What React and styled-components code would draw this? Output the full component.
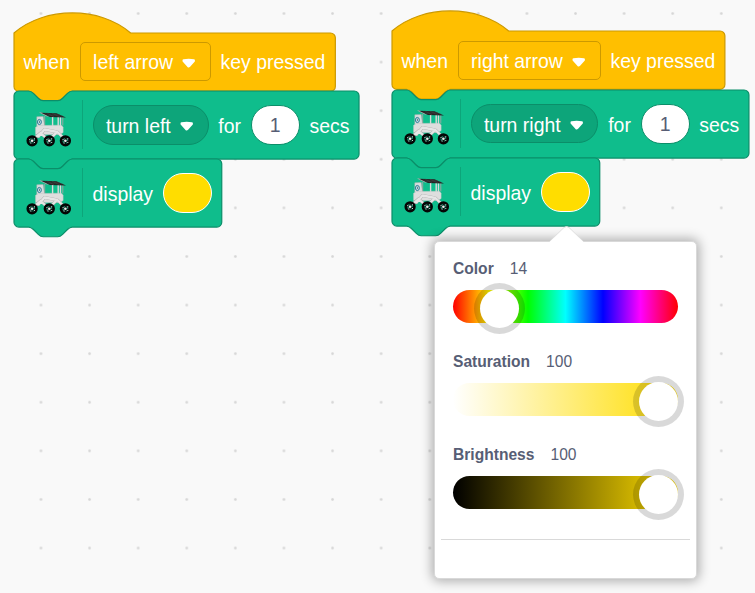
import React from "react";
import styled, { createGlobalStyle } from "styled-components";

const S = 1.215;

const GlobalStyle = createGlobalStyle`
  body {
    margin: 0;
    overflow: hidden;
    font-family: "Liberation Sans", Arial, sans-serif;
  }
`;

const Workspace = styled.main`
  position: relative;
  width: 755px;
  height: 593px;
  overflow: hidden;
  background-color: #f9f9f9;
  background-image: radial-gradient(circle, #d6d6d6 0.8px, rgba(214, 214, 214, 0) 1.8px);
  background-size: 48.6px 48.6px;
  background-position: 16.7px -10.8px;
`;

const Script = styled.section`
  position: absolute;
  left: ${(p) => p.$x}px;
  top: ${(p) => p.$y}px;
  display: flex;
  flex-direction: column;
  align-items: flex-start;
`;

const BlockBox = styled.div`
  position: relative;
  box-sizing: border-box;
  display: flex;
  align-items: center;
  gap: 9.72px;
  width: ${(p) => p.$width * S}px;
  height: ${(p) => p.$height * S}px;
  padding: 0 9.72px;
  color: #fff;
  font-size: 19.44px;
  white-space: nowrap;
`;

const BlockShape = styled.svg`
  position: absolute;
  left: 0;
  top: 0;
  width: 100%;
  height: 100%;
  overflow: visible;
`;

const Word = styled.span`
  position: relative;
  padding-top: ${(p) => (p.$low ? 3 : 2)}px;
`;

const Dropdown = styled.div`
  position: relative;
  box-sizing: border-box;
  display: flex;
  align-items: center;
  gap: 8.3px;
  height: 39.4px;
  padding: 0 13.1px 0 12.4px;
  border: 1px solid ${(p) => (p.$round ? "#0b8e69" : "#cc9900")};
  border-radius: ${(p) => (p.$round ? 20 : 5)}px;
  background: ${(p) => (p.$round ? "#0da57a" : "#ffbf00")};
`;

const CaretIcon = styled.svg`
  flex: none;
  width: 15.44px;
  height: 10.68px;
  margin-top: 3px;
`;

const Oval = styled.div`
  position: relative;
  box-sizing: border-box;
  display: grid;
  place-items: center;
  flex: none;
  width: 49px;
  height: 40px;
  padding-top: 2px;
  border: 1.2px solid ${(p) => (p.$swatch ? "#fff" : "#0b8e69")};
  border-radius: 20px;
  background: ${(p) => p.$swatch || "#fff"};
  color: #575e75;
`;

const RoverIcon = styled.svg`
  position: relative;
  flex: none;
  width: 48.6px;
  height: 48.6px;
`;

const Separator = styled.div`
  position: relative;
  flex: none;
  width: 1px;
  height: 49px;
  background: #0da57a;
`;

const Picker = styled.aside`
  position: absolute;
  left: 434px;
  top: 241px;
  box-sizing: border-box;
  width: 263px;
  height: 338px;
  padding: 18px 6px 0;
  border: 1px solid #d9d9d9;
  border-radius: 5px;
  background: #fff;
  box-shadow: 0 0 12px 2px rgba(0, 0, 0, 0.32);
  color: #575e75;
`;

const PickerArrow = styled.svg`
  position: absolute;
  left: 114px;
  top: -16px;
  width: 35px;
  height: 17px;
`;

const Channel = styled.div`
  height: 93px;
  padding: 0 12px;
`;

const ChannelHead = styled.div`
  display: flex;
  gap: 16px;
  height: 18px;
  margin-bottom: 12px;
  font-size: 15.6px;
  line-height: 18px;
`;

const ChannelName = styled.span`
  font-weight: 700;
`;

const Track = styled.div`
  position: relative;
  height: 33px;
  border-radius: 16.5px;
  background: ${(p) => p.$fill};
`;

const Handle = styled.div`
  position: absolute;
  left: ${(p) => p.$left}px;
  top: -1px;
  width: 39px;
  height: 39px;
  border-radius: 50%;
  background: #fff;
  box-shadow: 0 0 0 6px rgba(0, 0, 0, 0.15);
`;

const Divider = styled.hr`
  height: 1px;
  margin: 0;
  border: 0;
  background: #d9d9d9;
`;

const TAB =
  "H 48 c -2,0 -3,1 -4,2 l -4,4 c -1,1 -2,2 -4,2 h -12 c -2,0 -3,-1 -4,-2 l -4,-4 c -1,-1 -2,-2 -4,-2 H 4 a 4,4 0 0,1 -4,-4 z";
const NOTCH =
  "M 0,4 a 4,4 0 0,1 4,-4 H 12 c 2,0 3,1 4,2 l 4,4 c 1,1 2,2 4,2 h 12 c 2,0 3,-1 4,-2 l 4,-4 c 1,-1 2,-2 4,-2";
const HAT = "M 0,0 c 25,-22 71,-22 96,0";

function Block({ hat, width, children }) {
  const height = hat ? 48 : 56;
  const d = `${hat ? HAT : NOTCH} H ${width - 4} a 4,4 0 0,1 4,4 V ${height - 4} a 4,4 0 0,1 -4,4 ${TAB}`;
  return (
    <BlockBox $width={width} $height={height}>
      <BlockShape viewBox={`0 0 ${width} ${height}`}>
        <path d={d} fill={hat ? "#ffbf00" : "#0fbd8c"} stroke={hat ? "#cc9900" : "#0b8e69"} />
      </BlockShape>
      {children}
    </BlockBox>
  );
}

function Caret() {
  return (
    <CaretIcon viewBox="0 0 12.71 8.79">
      <path
        d="M2.2 1.9Q6.36 1.3 10.5 1.9L10.5 2.5L6.8 6.6Q6.36 7 5.9 6.6L2.2 2.5Z"
        fill="#fff"
        stroke="#fff"
        strokeWidth="1.9"
        strokeLinejoin="round"
      />
    </CaretIcon>
  );
}

const WHEELS = [8.1, 25.3, 41.4];
const LEGS = "M8.5 39l8-7 8 7M14 36l6.5-7.5 13 2.5 8 8M25 39l9-9";

function Rover() {
  return (
    <RoverIcon viewBox="0 0 48.6 48.6">
      <path d="M28.6 15v11M34.2 15v11M36.5 15v11" stroke="#dadada" strokeWidth="1.4" />
      <path d="M12.8 15.8l6.4-.4 1.4 10h-7.8z" fill="#d9dcdd" stroke="#aab0b2" strokeWidth=".5" />
      <path d="M20.7 15v10M38.8 15.5v9" stroke="#a5a5a5" strokeWidth=".9" />
      <path d="M11.6 26.3l3-1.8 22.5-.3 2 1.7v5.6l-3 2H11.6z" fill="#dedede" stroke="#c8c8c8" strokeWidth=".5" />
      <path d={LEGS} fill="none" stroke="#aaa" strokeWidth="3" strokeLinejoin="round" />
      <path d={LEGS} fill="none" stroke="#e6e6e6" strokeWidth="2.3" strokeLinejoin="round" />
      <path d="M15 11.4l3 .2 7 3.7-2 .3z" fill="#b0b0b0" />
      <path d="M17 11.8l15.5.4 9.5 4.2-16-.3z" fill="#202020" />
      <path d="M21 13l15 .5M24 14.6l15 .3M23 12l7 3.8M28 12.2l8 3.8" stroke="#555" strokeWidth=".35" />
      <ellipse cx="15.4" cy="21" rx="1.9" ry="2.6" fill="#d9edf5" stroke="#237892" strokeWidth="1" />
      <path d="M15.4 19.6v2.6" stroke="#29434e" strokeWidth=".7" />
      {WHEELS.map((x) => (
        <g key={x} transform={`translate(${x} 39.8)`}>
          <circle r="4.3" fill="#147d61" stroke="#050505" strokeWidth="2.7" />
          <path d="M0-3.5V3.5M-3.4-1L3.4 1M-2 3L2-3M-2.6-2.4L2.6 2.4" stroke="#080808" strokeWidth="1" />
          <circle r="1.3" fill="#eee" />
          <path d="M-2.9-1.2h1.1M1.8-2h1.1M-1.9 2.2h1.1M1.9 1.7h1" stroke="#d5eee6" strokeWidth=".9" />
        </g>
      ))}
    </RoverIcon>
  );
}

function KeyScript({ x, y, direction, hatWidth, turnWidth }) {
  return (
    <Script $x={x} $y={y}>
      <Block hat width={hatWidth}>
        <Word>when</Word>
        <Dropdown>
          <Word>{direction} arrow</Word>
          <Caret />
        </Dropdown>
        <Word>key pressed</Word>
      </Block>
      <Block width={turnWidth}>
        <Rover />
        <Separator />
        <Dropdown $round>
          <Word $low>turn {direction}</Word>
          <Caret />
        </Dropdown>
        <Word $low>for</Word>
        <Oval>1</Oval>
        <Word $low>secs</Word>
      </Block>
      <Block width={171}>
        <Rover />
        <Separator />
        <Word $low>display</Word>
        <Oval $swatch="#ffdd00" />
      </Block>
    </Script>
  );
}

const CHANNELS = [
  {
    name: "Color",
    value: 14,
    left: 27,
    fill: "linear-gradient(90deg, #f00, #ff0 16.67%, #0f0 33.33%, #0ff 50%, #00f 66.67%, #f0f 83.33%, #f00)",
  },
  { name: "Saturation", value: 100, left: 186, fill: "linear-gradient(90deg, #fff, #ffdd00)" },
  { name: "Brightness", value: 100, left: 186, fill: "linear-gradient(90deg, #000, #ffdd00)" },
];

function ColorPicker() {
  return (
    <Picker>
      <PickerArrow viewBox="0 0 35 17">
        <path d="M0 17V16L15 1.5Q17.5-.5 20 1.5L35 16V17Z" fill="#fff" />
        <path d="M0 16L15 1.5Q17.5-.5 20 1.5L35 16" fill="none" stroke="#d9d9d9" strokeWidth=".8" />
      </PickerArrow>
      {CHANNELS.map((c) => (
        <Channel key={c.name}>
          <ChannelHead>
            <ChannelName>{c.name}</ChannelName>
            <span>{c.value}</span>
          </ChannelHead>
          <Track $fill={c.fill}>
            <Handle $left={c.left} />
          </Track>
        </Channel>
      ))}
      <Divider />
    </Picker>
  );
}

export default function App() {
  return (
    <>
      <GlobalStyle />
      <Workspace>
        <KeyScript x={13.8} y={32.6} direction="left" hatWidth={264.5} turnWidth={284} />
        <KeyScript x={391.8} y={31.2} direction="right" hatWidth={274} turnWidth={293.8} />
        <ColorPicker />
      </Workspace>
    </>
  );
}
